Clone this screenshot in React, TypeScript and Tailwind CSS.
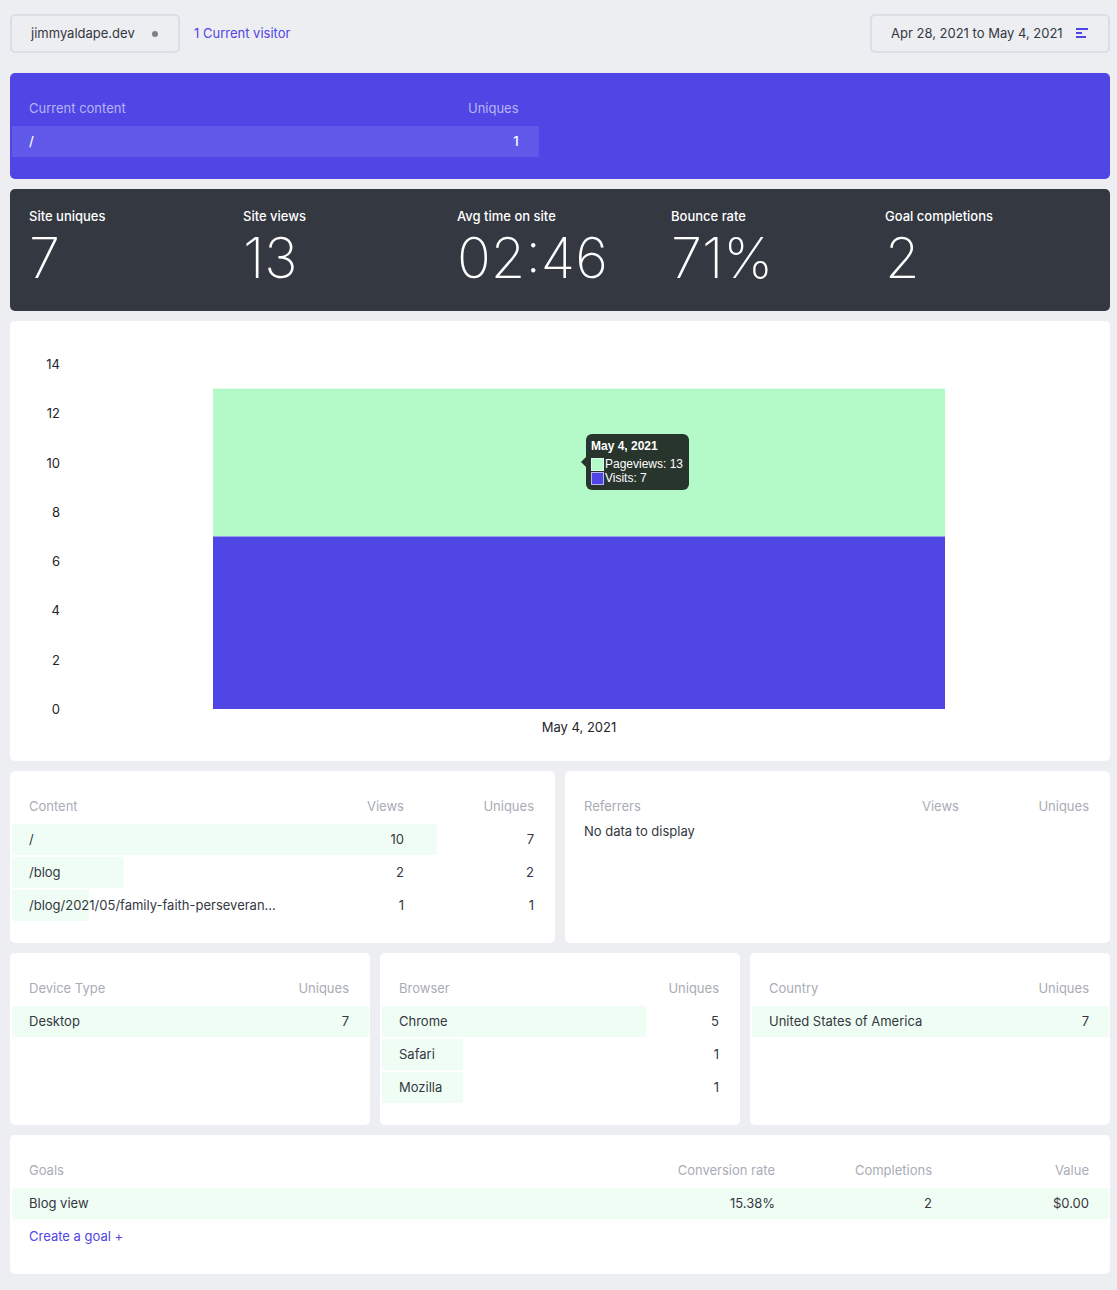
import React from "react";

type Row = { cells: string[]; bar: number };

type ReportProps = {
  columns: string[];
  widths: string[];
  rows: Row[];
  tone?: "light" | "brand";
  children?: React.ReactNode;
};

const stats = [
  { label: "Site uniques", value: "7" },
  { label: "Site views", value: "13" },
  { label: "Avg time on site", value: "02:46" },
  { label: "Bounce rate", value: "71%" },
  { label: "Goal completions", value: "2" },
];

function Report({ columns, widths, rows, tone = "light", children }: ReportProps) {
  const brand = tone === "brand";
  const barColor = brand ? "#6059ea" : "#f0fdf4";
  return (
    <section
      className={
        brand
          ? "rounded-[5px] bg-[#4f46e5] pt-[18px] pr-px pb-5 pl-0.5"
          : "rounded-[5px] bg-white pt-[18px] pr-px pb-5 pl-0.5"
      }
    >
      <table
        className={
          brand
            ? "w-[48%] table-fixed border-separate border-spacing-x-0 border-spacing-y-0.5 text-white"
            : "w-full table-fixed border-separate border-spacing-x-0 border-spacing-y-0.5"
        }
      >
        <thead>
          <tr className={brand ? "h-[31px] text-[#b8b5f5]" : "h-[31px] text-[#a9acb6]"}>
            {columns.map((name, i) => (
              <th
                key={name}
                scope="col"
                className={`${widths[i]} p-0 pb-0.5 font-normal ${i === 0 ? "pl-[17px] text-left" : "pr-5 text-right"}`}
              >
                {name}
              </th>
            ))}
          </tr>
        </thead>
        <tbody>
          {rows.map((row) => (
            <tr
              key={row.cells[0]}
              className={brand ? "h-[31px] bg-no-repeat font-medium" : "h-[31px] bg-no-repeat"}
              style={{
                backgroundImage: `linear-gradient(${barColor}, ${barColor})`,
                backgroundSize: `${row.bar}% 100%`,
              }}
            >
              {row.cells.map((cell, i) => (
                <td
                  key={i}
                  className={i === 0 ? "truncate p-0 pb-0.5 pl-[17px]" : "p-0 pr-5 pb-0.5 text-right"}
                >
                  {cell}
                </td>
              ))}
            </tr>
          ))}
        </tbody>
      </table>
      {children}
    </section>
  );
}

function Chart() {
  const ticks = [14, 12, 10, 8, 6, 4, 2, 0];
  const y = (value: number) => 388 - (value * 345) / 14;
  return (
    <section className="relative rounded-[5px] bg-white">
      <svg
        viewBox="0 0 1100 440"
        className="block w-full"
        role="img"
        aria-label="Pageviews and visits on May 4, 2021"
      >
        <rect x="203" y={y(13)} width="732" height={y(7) - y(13)} fill="#b3fac8" />
        <rect x="203" y={y(7)} width="732" height={y(0) - y(7)} fill="#4f46e5" />
        <g fill="#22252b" fontSize="13">
          {ticks.map((tick) => (
            <text key={tick} x="50" y={y(tick) + 5} textAnchor="end">
              {tick}
            </text>
          ))}
          <text x="569" y="411" textAnchor="middle">
            May 4, 2021
          </text>
        </g>
      </svg>
      <div className="absolute top-[113px] left-[571px] flex items-center font-['Liberation_Sans',sans-serif] text-xs text-white">
        <svg width="5" height="10" viewBox="0 0 5 10" className="block" aria-hidden="true">
          <path d="M5 0 0 5l5 5z" fill="#28352d" />
        </svg>
        <div className="rounded-md bg-[#28352d] pt-1 pr-1.5 pb-[5px] pl-[5px] leading-[14px]">
          <p className="mb-[3px] font-bold leading-4">May 4, 2021</p>
          <p className="flex items-center gap-px">
            <span className="size-[13px] border border-white/60 bg-[#b3fac8]" />
            Pageviews: 13
          </p>
          <p className="flex items-center gap-px">
            <span className="size-[13px] border border-white/60 bg-[#4f46e5]" />
            Visits: 7
          </p>
        </div>
      </div>
    </section>
  );
}

export default function App() {
  return (
    <div className="min-h-screen bg-[#edeef2] pt-3.5 pr-[7px] pb-4 pl-2.5 font-[Inter,sans-serif] text-[13px] leading-5 text-[#343841]">
      <header className="mb-5 flex items-center">
        <button
          type="button"
          className="flex h-[39px] w-[170px] items-center justify-between rounded-[5px] border-2 border-[#dcdde5] pr-5 pl-[19px]"
        >
          <span className="pb-0.5">jimmyaldape.dev</span>
          <span className="size-1.5 rounded-full bg-[#808080]" />
        </button>
        <a href="#visitors" className="ml-3.5 pb-0.5 text-[#4f46e5]">
          1 Current visitor
        </a>
        <button
          type="button"
          className="ml-auto flex h-[39px] w-60 items-center justify-between rounded-[5px] border-2 border-[#dcdde5] pr-5 pb-0.5 pl-[19px]"
        >
          Apr 28, 2021 to May 4, 2021
          <svg width="12" height="10" viewBox="0 0 12 10" fill="#4f46e5" aria-hidden="true">
            <path d="M0 0h12v2H0zM0 4h6v2H0zM0 8h10v2H0z" />
          </svg>
        </button>
      </header>

      <main className="flex flex-col gap-2.5">
        <Report
          tone="brand"
          columns={["Current content", "Uniques"]}
          widths={["", "w-[24%]"]}
          rows={[{ cells: ["/", "1"], bar: 100 }]}
        />

        <section className="grid grid-cols-5 rounded-[5px] bg-[#343841] pt-[17px] pr-[11px] pb-[21px] pl-[19px] text-white">
          {stats.map((stat) => (
            <div key={stat.label}>
              <h2 className="font-medium">{stat.label}</h2>
              <p className="text-[56px] leading-[64px] font-extralight">{stat.value}</p>
            </div>
          ))}
        </section>

        <Chart />

        <div className="grid grid-cols-2 gap-2.5">
          <Report
            columns={["Content", "Views", "Uniques"]}
            widths={["", "w-[24%]", "w-[24%]"]}
            rows={[
              { cells: ["/", "10", "7"], bar: 78.4 },
              { cells: ["/blog", "2", "2"], bar: 20.6 },
              { cells: ["/blog/2021/05/family-faith-perseveran...", "1", "1"], bar: 14.2 },
            ]}
          />
          <Report
            columns={["Referrers", "Views", "Uniques"]}
            widths={["", "w-[24%]", "w-[24%]"]}
            rows={[]}
          >
            <p className="-mt-[3px] pl-[17px]">No data to display</p>
          </Report>
        </div>

        <div className="grid grid-cols-3 gap-2.5">
          <Report
            columns={["Device Type", "Uniques"]}
            widths={["", "w-[30%]"]}
            rows={[{ cells: ["Desktop", "7"], bar: 100 }]}
          />
          <Report
            columns={["Browser", "Uniques"]}
            widths={["", "w-[30%]"]}
            rows={[
              { cells: ["Chrome", "5"], bar: 74 },
              { cells: ["Safari", "1"], bar: 22.8 },
              { cells: ["Mozilla", "1"], bar: 22.8 },
            ]}
          />
          <Report
            columns={["Country", "Uniques"]}
            widths={["", "w-[30%]"]}
            rows={[{ cells: ["United States of America", "7"], bar: 100 }]}
          />
        </div>

        <Report
          columns={["Goals", "Conversion rate", "Completions", "Value"]}
          widths={["", "w-[157px]", "w-[157px]", "w-[157px]"]}
          rows={[{ cells: ["Blog view", "15.38%", "2", "$0.00"], bar: 100 }]}
        >
          <div className="flex h-[33px] items-center pb-1 pl-[17px]">
            <a href="#new-goal" className="text-[#4f46e5]">
              Create a goal +
            </a>
          </div>
        </Report>
      </main>
    </div>
  );
}
